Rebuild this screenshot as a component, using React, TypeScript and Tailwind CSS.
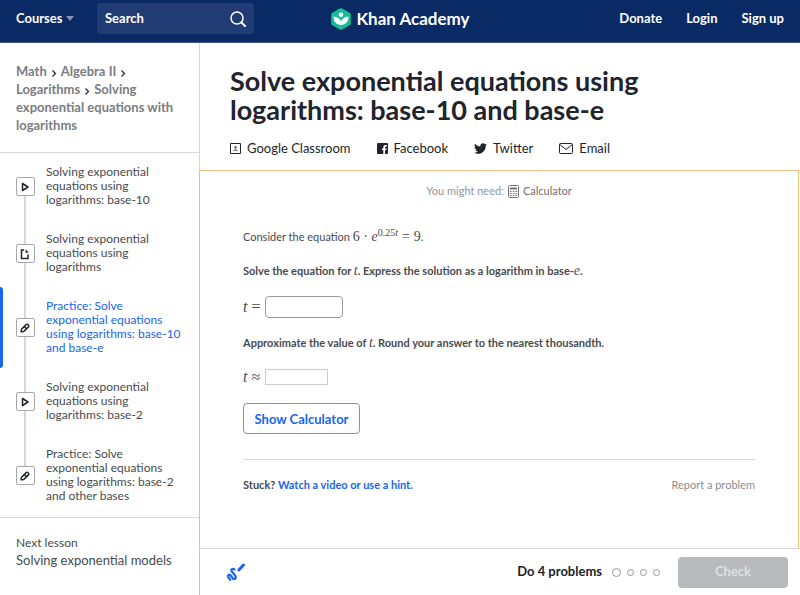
import React from "react";

type Kind = "video" | "article" | "exercise";

const lessons: { kind: Kind; title: string; active?: boolean }[] = [
  { kind: "video", title: "Solving exponential equations using logarithms: base-10" },
  { kind: "article", title: "Solving exponential equations using logarithms" },
  { kind: "exercise", title: "Practice: Solve exponential equations using logarithms: base-10 and base-e", active: true },
  { kind: "video", title: "Solving exponential equations using logarithms: base-2" },
  { kind: "exercise", title: "Practice: Solve exponential equations using logarithms: base-2 and other bases" },
];

function KindIcon({ kind }: { kind: Kind }) {
  return (
    <svg viewBox="0 0 12 12" className="size-3" fill="none" stroke="#21242c" strokeWidth="1.5" strokeLinejoin="round" aria-hidden="true">
      {kind === "video" && <path d="M3.5 2.5v7L9 6z" />}
      {kind === "article" && (
        <>
          <path d="M5 2H2.500v8.500H9V6.500" strokeLinejoin="miter" />
          <path d="M6.500 1.200 9.800 4.800H6.500z" fill="#21242c" stroke="none" />
        </>
      )}
      {kind === "exercise" && (
        <>
          <path d="M2.200 9.800l.3-2.600 4.600-4.600a1.300 1.300 0 0 1 1.900 0l.4.4a1.300 1.300 0 0 1 0 1.900L4.800 9.500z" />
          <path d="M5.200 4.500l2.300 2.300" />
        </>
      )}
    </svg>
  );
}

function LessonItem({ kind, title, active, first, last }: { kind: Kind; title: string; active?: boolean; first: boolean; last: boolean }) {
  return (
    <li className={active ? "relative flex text-[#1865f2]" : "relative flex text-[#484b4e]"}>
      {active && <span className="absolute inset-y-0 left-0 w-[3px] rounded-r-sm bg-[#1865f2]" />}
      <div className="ml-4 flex w-[18px] flex-none flex-col items-center">
        <span className={first ? "w-0.5 flex-1" : "w-0.5 flex-1 bg-[#d6d8da]"} />
        <span className="flex h-[19px] w-[19px] items-center justify-center rounded-xs border border-[#a5a7aa] bg-white">
          <KindIcon kind={kind} />
        </span>
        <span className={last ? "w-0.5 flex-1" : "w-0.5 flex-1 bg-[#d6d8da]"} />
      </div>
      <a href="#lesson" className="ml-3 flex-1 pt-3 pr-4 pb-[13px] text-[12px] leading-[14px]">
        {title}
      </a>
    </li>
  );
}

function Chevron() {
  return (
    <svg viewBox="0 0 6 8" className="mx-1 inline h-2 w-1.5" fill="none" stroke="#21242c" strokeWidth="1.2" aria-hidden="true">
      <path d="M1.500 1.500 4.500 4.500l-3 3" />
    </svg>
  );
}

const V = ({ children }: { children: React.ReactNode }) => (
  <i className="font-['Liberation_Serif',serif] text-[14px] font-normal">{children}</i>
);

export default function App() {
  return (
    <div className="flex min-h-screen flex-col bg-white font-['Lato',sans-serif] text-[#21242c]">
      <header className="flex h-[43px] flex-none items-center border-b border-[#3b5585] bg-[#0a2a66] px-4 pb-[5px] text-[13px] font-bold text-white">
        <div className="flex flex-1 items-center">
          <button type="button" className="flex w-[81px] items-center gap-1">
            Courses
            <svg viewBox="0 0 8 5" className="h-[5px] w-2" fill="#8494b2" aria-hidden="true">
              <path d="M0 0h8L4 5z" />
            </svg>
          </button>
          <div className="flex h-[31px] w-[157px] items-center rounded-sm bg-[#213c74] px-2">
            <input type="search" aria-label="Search" placeholder="Search" className="w-0 flex-1 bg-transparent outline-none placeholder:text-white" />
            <svg viewBox="0 0 16 16" className="size-4" fill="none" stroke="#fff" strokeWidth="1.500" strokeLinecap="round" aria-hidden="true">
              <circle cx="7" cy="7" r="6" />
              <path d="M11.500 11.500 15 15" strokeWidth="2" />
            </svg>
          </div>
        </div>
        <a href="#home" className="flex items-center gap-1 text-[17px]">
          <svg viewBox="0 0 22 22" className="size-[22px]" aria-hidden="true">
            <path d="M9.800.5a2.400 2.400 0 0 1 2.400 0l7.400 4.200a2.200 2.200 0 0 1 1.200 2v8.600a2.200 2.200 0 0 1-1.200 2l-7.400 4.200a2.400 2.400 0 0 1-2.400 0l-7.400-4.200a2.200 2.200 0 0 1-1.200-2V6.700a2.200 2.200 0 0 1 1.200-2z" fill="#14bf96" />
            <circle cx="11" cy="6.700" r="2.300" fill="#fff" />
            <path d="M3.500 8.800c4 0 6.800 2 7.500 5.200.7-3.200 3.500-5.200 7.500-5.200 0 5-3.200 8.200-7.500 8.200s-7.500-3.200-7.500-8.200z" fill="#fff" />
          </svg>
          Khan Academy
        </a>
        <nav className="flex flex-1 justify-end gap-6">
          <a href="#donate">Donate</a>
          <a href="#login">Login</a>
          <a href="#signup">Sign up</a>
        </nav>
      </header>

      <div className="flex flex-1">
        <aside className="w-[199px] flex-none">
          <nav aria-label="Breadcrumb" className="border-b border-[#d6d8da] pt-[19px] pr-6 pb-[18px] pl-4 text-[13px] leading-[18px] font-bold text-[#7b7d82]">
            <a href="#math">Math</a>
            <Chevron />
            <a href="#algebra">Algebra II</a>
            <Chevron /> <a href="#logarithms">Logarithms</a>
            <Chevron />
            <a href="#solving">Solving exponential equations with logarithms</a>
          </nav>
          <ul className="pb-px">
            {lessons.map((l, i) => (
              <LessonItem key={i} {...l} first={i === 0} last={i === lessons.length - 1} />
            ))}
          </ul>
          <div className="border-t border-[#d6d8da] px-4 pt-4 text-[#484b4e]">
            <p className="text-[12px] leading-[18px]">Next lesson</p>
            <a href="#next" className="block text-[13px] leading-4">Solving exponential models</a>
          </div>
        </aside>

        <main className="flex min-w-0 flex-1 flex-col">
          <div className="border-l border-[#d6d8da] pt-[23px] pr-8 pb-[14px] pl-[30px]">
            <h1 className="max-w-[480px] text-[27px] leading-[29px] font-bold">Solve exponential equations using logarithms: base-10 and base-e</h1>
            <div className="mt-4 flex h-4 items-center gap-[26px] text-[13px] leading-4">
              <a href="#classroom" className="flex items-center gap-1.5">
                <svg viewBox="0 0 11 11" className="size-[11px]" fill="none" stroke="#21242c" aria-hidden="true">
                  <path d="M.5.5h10v10H.5z" />
                  <circle cx="5.500" cy="4.300" r="1.100" fill="#21242c" stroke="none" />
                  <path d="M3 7.500c.5-1.500 4.500-1.500 5 0z" fill="#21242c" stroke="none" />
                </svg>
                Google Classroom
              </a>
              <a href="#facebook" className="flex items-center gap-1.5">
                <svg viewBox="0 0 11 11" className="size-[11px]" fill="#21242c" aria-hidden="true">
                  <path d="M1 0h9a1 1 0 0 1 1 1v9a1 1 0 0 1-1 1H8V7h1.400l.2-1.600H8V4.500c0-.5.200-.8.800-.8h.9V2.200c-1.900-.3-3.400.2-3.400 2.100v1.100H5V7h1.300v4H1a1 1 0 0 1-1-1V1a1 1 0 0 1 1-1z" />
                </svg>
                Facebook
              </a>
              <a href="#twitter" className="flex items-center gap-1.5">
                <svg viewBox="0 2 24 20" className="h-[11px] w-[13px]" fill="#21242c" aria-hidden="true">
                  <path d="M23.950 4.570a10 10 0 0 1-2.820.77 4.960 4.960 0 0 0 2.160-2.720c-.95.550-2 .950-3.130 1.180a4.920 4.920 0 0 0-8.380 4.480C7.690 8.090 4.070 6.130 1.640 3.160a4.820 4.820 0 0 0-.67 2.480c0 1.700.870 3.210 2.190 4.100a4.900 4.900 0 0 1-2.230-.620v.060a4.920 4.920 0 0 0 3.950 4.830 5 5 0 0 1-2.210.080 4.940 4.940 0 0 0 4.600 3.420A9.870 9.870 0 0 1 0 19.540a13.990 13.990 0 0 0 7.550 2.210c9.050 0 14-7.500 14-13.980 0-.210 0-.420-.020-.630a9.940 9.940 0 0 0 2.460-2.550z" />
                </svg>
                Twitter
              </a>
              <a href="#email" className="flex items-center gap-1.5">
                <svg viewBox="0 0 14 11" className="h-[11px] w-[14px]" fill="none" stroke="#21242c" aria-hidden="true">
                  <rect x=".5" y=".5" width="13" height="10" rx="1" />
                  <path d="M.8 1.500 7 6.500l6.200-5" />
                </svg>
                Email
              </a>
            </div>
          </div>

          <section className="mr-px flex flex-1 flex-col border border-b-0 border-[#e6bf83] px-[43px] text-[11px] leading-4 text-[#484b4e]">
            <p className="flex items-center justify-center gap-1 pt-3 text-[#94969b]">
              You might need:
              <svg viewBox="0 0 11 13" className="h-[13px] w-[11px]" fill="none" stroke="#717378" aria-hidden="true">
                <rect x=".5" y=".5" width="10" height="12" rx="1" />
                <path d="M2 3.500h7" strokeWidth="2" />
                <path d="M2 6.500h7M2 8.500h7M2 10.500h7" strokeDasharray="1.600 1.100" />
              </svg>
              <a href="#calculator" className="text-[#6c6f74]">Calculator</a>
            </p>
            <p className="mt-[30px]">
              Consider the equation{" "}
              <span className="font-['Liberation_Serif',serif] text-[14px]">
                6 · <i>e</i>
                <sup className="text-[10px]">0.25<i>t</i></sup>
                <span className="mx-1">=</span>9
              </span>
              .
            </p>
            <p className="mt-[18px] font-bold">
              Solve the equation for <V>t</V>. Express the solution as a logarithm in base-<V>e</V>.
            </p>
            <label className="mt-[17px] flex items-center font-['Liberation_Serif',serif] text-[16px]">
              <span className="w-[22px] whitespace-nowrap"><i>t</i> =</span>
              <input aria-label="Exact value of t" className="h-[22px] w-[78px] rounded-sm border border-[#999] px-1 outline-none" />
            </label>
            <p className="mt-[17px] font-bold">
              Approximate the value of <V>t</V>. Round your answer to the nearest thousandth.
            </p>
            <label className="mt-[18px] flex items-center font-['Liberation_Serif',serif] text-[16px]">
              <span className="w-[22px] whitespace-nowrap"><i>t</i> ≈</span>
              <input aria-label="Approximate value of t" className="h-4 w-[63px] border border-[#ccc] px-1 outline-none" />
            </label>
            <button type="button" className="mt-[18px] h-[31px] w-[117px] rounded-sm border border-[#8f9196] text-[13px] font-bold text-[#1865f2]">
              Show Calculator
            </button>
            <div className="mt-[25px] flex items-center justify-between border-t border-[#d6d8da] pt-[17px]">
              <p className="font-bold">
                Stuck?{" "}
                <a href="#hint" className="text-[#1865f2]">Watch a video or use a hint.</a>
              </p>
              <a href="#report" className="text-[#8b8d93]">Report a problem</a>
            </div>
          </section>

          <footer className="flex h-[47px] flex-none items-center border-t border-l border-t-[#d6d8da] border-l-[#e6bf83] pr-3 pl-[26px]">
            <button type="button" aria-label="Scratchpad">
              <svg viewBox="0 0 20 20" className="size-5" fill="none" stroke="#1865f2" strokeLinecap="round" strokeLinejoin="round" aria-hidden="true">
                <path d="M12.800 8 17.500 3" strokeWidth="3" />
                <path d="M8.500 7.500c-1.800-1.500-4 0-2.700 1.900l3.600 4.600c1.300 2.300-1.200 4-2.800 2.200l-1.900-2.700c-1.500-1.700-3.400-.2-2.500 1.500l2 2.800" strokeWidth="2.200" />
              </svg>
            </button>
            <span className="ml-auto text-[13px] font-bold">Do 4 problems</span>
            <div className="mr-[18px] ml-[10px] flex items-center gap-1.5">
              <span className="size-[9px] rounded-full border border-[#999]" />
              <span className="size-[7px] rounded-full border border-[#999]" />
              <span className="size-[7px] rounded-full border border-[#999]" />
              <span className="size-[7px] rounded-full border border-[#999]" />
            </div>
            <button type="button" disabled className="h-[31px] w-[110px] rounded-sm bg-[#b8babd] text-[13px] font-bold text-[#dfe0e2]">
              Check
            </button>
          </footer>
        </main>
      </div>
    </div>
  );
}
